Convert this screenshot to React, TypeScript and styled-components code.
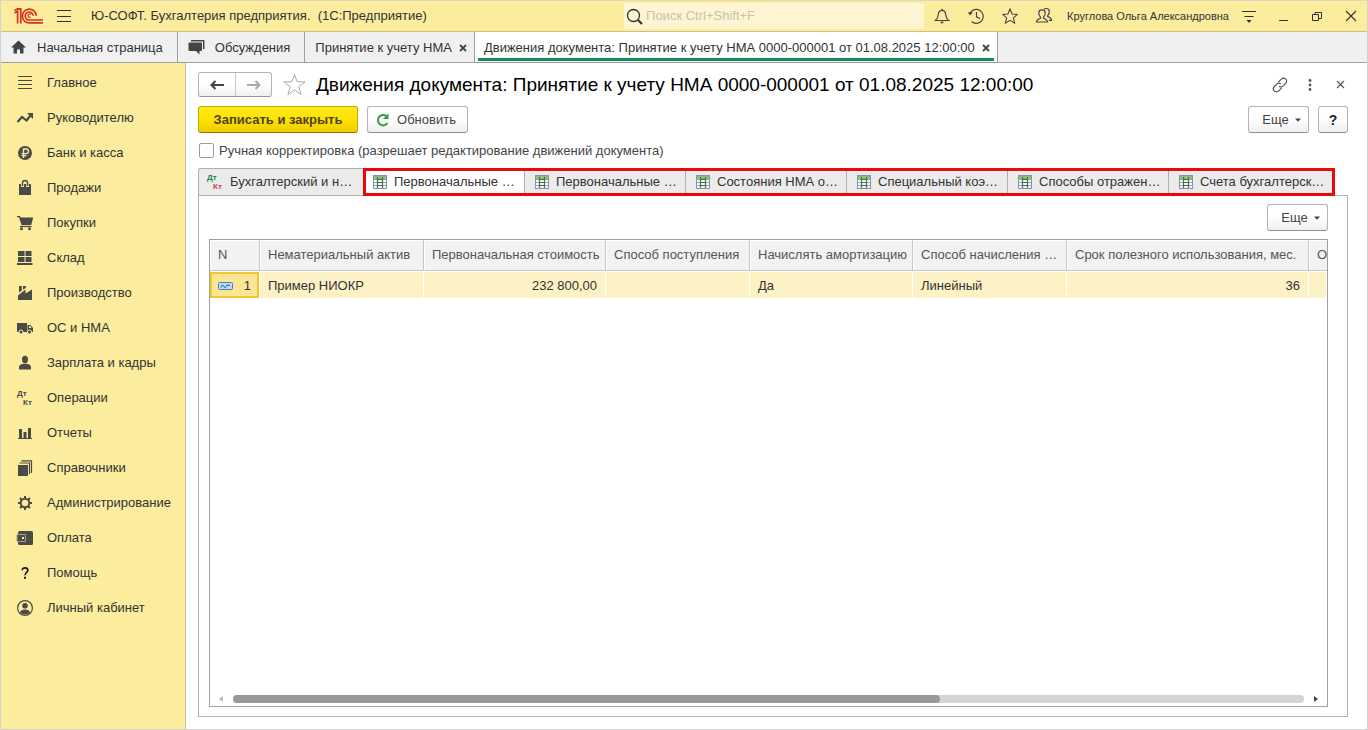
import React from "react";
import styled, { createGlobalStyle, css } from "styled-components";

const GlobalStyle = createGlobalStyle`
  *, *::before, *::after { box-sizing: border-box; }
  body { margin: 0; background: #fff; }
  body, button, input, table { font-family: "Liberation Sans", Arial, sans-serif; font-size: 13px; line-height: 16px; color: #333; }
  button { padding: 0; margin: 0; border: 0; background: none; cursor: pointer; }
  svg { display: block; flex: none; }
`;

/* ---------- frame ---------- */
const Frame = styled.div`
  display: flex;
  flex-direction: column;
  min-height: 100vh;
  border: 1px solid #d2d2d2;
  border-top-color: #dcd8bc;
`;

const TitleBar = styled.header`
  display: flex;
  align-items: center;
  height: 31px;
  background: #fbec9e;
  border-bottom: 1px solid #cdbf7c;
`;

const Logo = styled.a`
  margin-left: 12px;
`;

const MenuButton = styled.button`
  margin-left: 12px;
  color: #333;
`;

const AppTitle = styled.span`
  margin-left: 19px;
  white-space: pre;
`;

const SearchBox = styled.label`
  display: flex;
  align-items: center;
  gap: 3px;
  flex: 0 1 300px;
  height: 26px;
  margin-left: auto;
  padding-left: 2px;
  background: #fef5d2;
  border-radius: 2px;
`;

const SearchInput = styled.input`
  flex: 1;
  min-width: 0;
  padding: 0;
  border: 0;
  outline: 0;
  background: transparent;
  &::placeholder { color: #c9c3ab; opacity: 1; }
`;

const TitleTools = styled.div`
  display: flex;
  align-items: center;
  gap: 2px;
  margin-left: 2px;
`;

const ToolButton = styled.button`
  display: flex;
  align-items: center;
  justify-content: center;
  width: 32px;
  height: 28px;
`;

const UserName = styled.button`
  padding: 0 2px 0 5px;
  font-size: 11px;
  white-space: nowrap;
`;

/* ---------- window tabs ---------- */
const WindowTabs = styled.nav`
  display: flex;
  height: 31px;
  background: #f0f0f0;
  border-bottom: 1px solid #a0a0a0;
`;

const WindowTab = styled.div<{ $active?: boolean; $pinned?: boolean }>`
  display: flex;
  align-items: center;
  padding: 2px ${p => (p.$pinned ? 14 : 7)}px 0 10px;
  border-right: 1px solid #a0a0a0;
  white-space: nowrap;
  ${p => p.$active && css`
    padding-left: 9px;
    background: #fff;
    box-shadow: inset 3px 0 #fff, inset -3px 0 #fff, inset 0 -1px #fff, inset 0 -4px #1a8a58;
  `}
`;

const WindowTabLabel = styled.button`
  display: flex;
  align-items: center;
  gap: 10px;
`;

const CloseTab = styled.button`
  margin-left: 7px;
`;

/* ---------- sections ---------- */
const Body = styled.div`
  display: flex;
  flex: 1;
`;

const Sidebar = styled.nav`
  flex: none;
  width: 185px;
  padding-top: 2px;
  background: #fbec9e;
  border-right: 1px solid #cfc58d;
`;

const Section = styled.a`
  display: flex;
  align-items: center;
  gap: 13px;
  height: 35px;
  padding-left: 15px;
  color: #333;
  text-decoration: none;
  white-space: nowrap;
`;

/* ---------- form ---------- */
const Form = styled.main`
  display: flex;
  flex-direction: column;
  flex: 1;
  min-width: 0;
  padding: 9px 19px 12px 12px;
`;

const FormHead = styled.div`
  display: flex;
  align-items: center;
  height: 25px;
`;

const NavButtons = styled.div`
  display: flex;
  height: 25px;
  border: 1px solid #b4b4b4;
  border-bottom-color: #939393;
  border-radius: 3px;
  background: linear-gradient(#fff 50%, #f0f0f0);
`;

const NavButton = styled.button`
  display: flex;
  align-items: center;
  justify-content: center;
  width: 36px;
  & + & { border-left: 1px solid #c8c8c8; }
`;

const StarButton = styled.button`
  margin: 0 10px 0 11px;
`;

const FormTitle = styled.h1`
  flex: 1;
  margin: 0;
  font-size: 19px;
  line-height: 24px;
  font-weight: 400;
  color: #000;
  white-space: nowrap;
`;

const FormTools = styled.div`
  display: flex;
  margin-right: -7px;
`;

const FormTool = styled.button`
  display: flex;
  align-items: center;
  justify-content: center;
  width: 30px;
  height: 24px;
`;

const Commands = styled.div`
  display: flex;
  align-items: center;
  gap: 9px;
  margin-top: 9px;
`;

const Spacer = styled.span`
  flex: 1;
`;

const Button = styled.button<{ $primary?: boolean; $width?: number }>`
  display: flex;
  align-items: center;
  justify-content: center;
  gap: 6px;
  height: 27px;
  width: ${p => p.$width}px;
  border: 1px solid #b4b4b4;
  border-bottom-color: #8f8f8f;
  border-radius: 3px;
  background: linear-gradient(#fff 45%, #f0f0f0);
  color: #444;
  white-space: nowrap;
  ${p => p.$primary && css`
    border-color: #c3a900;
    border-bottom-color: #8f7d00;
    background: linear-gradient(#ffea1a, #ffe200 50%, #efcb00);
    color: #4c4423;
    font-weight: 700;
  `}
`;

const MoreText = styled.span`
  padding-left: 6px;
`;

const RefreshText = styled.span`
  padding-right: 4px;
`;

const HelpText = styled.b`
  font-size: 14px;
  color: #222;
`;

const CheckLine = styled.label`
  display: flex;
  align-items: center;
  gap: 5px;
  align-self: flex-start;
  height: 17px;
  margin: 9px 0 9px 1px;
  color: #444;
`;

const CheckBox = styled.input`
  appearance: none;
  width: 15px;
  height: 15px;
  margin: 0;
  border: 1px solid #9a9a9a;
  border-radius: 2px;
  background: #fff;
`;

const RegisterTabs = styled.div`
  display: grid;
  grid-template-columns: minmax(0, 165fr) minmax(0, 972fr);
  margin-right: 13px;
  height: 28px;
  margin-bottom: -1px;
`;

const MarkedTabs = styled.div`
  position: relative;
  display: grid;
  grid-template-columns: minmax(0, 162fr) repeat(4, minmax(0, 161fr)) minmax(0, 166fr);
  &::after {
    content: "";
    position: absolute;
    inset: 0;
    border: 3px solid #e90909;
    pointer-events: none;
  }
`;

const RegisterTab = styled.button<{ $active?: boolean; $first?: boolean }>`
  display: flex;
  align-items: center;
  gap: 7px;
  padding: 0 4px 0 10px;
  border: 1px solid #b0b0b0;
  border-left: 0;
  background: ${p => (p.$active ? "#fff" : "#ebebeb")};
  white-space: nowrap;
  ${p => p.$first && css`
    gap: 6px;
    padding-left: 7px;
    border-left: 1px solid #b0b0b0;
    border-right: 0;
    border-radius: 3px 0 0 0;
  `}
`;

const Panel = styled.section`
  display: flex;
  flex-direction: column;
  flex: 1;
  padding: 8px 19px 9px 10px;
  border: 1px solid #b0b0b0;
`;

const PanelCommands = styled.div`
  display: flex;
  justify-content: flex-end;
  margin-bottom: 8px;
`;

const Grid = styled.div`
  display: flex;
  flex-direction: column;
  flex: 1;
  overflow: hidden;
  border: 1px solid #a0a0a0;
`;

const Table = styled.table`
  width: 100%;
  table-layout: fixed;
  border-collapse: separate;
  border-spacing: 0;
`;

const HeadCell = styled.th`
  height: 31px;
  padding: 0 4px 0 8px;
  overflow: hidden;
  white-space: nowrap;
  text-align: left;
  font-weight: 400;
  color: #555;
  background: #f2f2f2;
  border-right: 1px solid #c6c6c6;
  border-bottom: 1px solid #c6c6c6;
  box-shadow: inset 1px 1px #fff;
  &:last-child { padding-right: 0; border-right: 0; }
`;

const Cell = styled.td<{ $right?: boolean; $current?: boolean }>`
  height: 28px;
  padding: 2px 8px 0 8px;
  background: #fdf1c6;
  border: solid #fff;
  border-width: 1px 1px 1px 0;
  text-align: ${p => (p.$right ? "right" : "left")};
  ${p => p.$current && css`
    background: #fce594;
    box-shadow: inset 0 0 0 2px #f0c530;
  `}
`;

const RowNumber = styled.div`
  display: flex;
  align-items: center;
  justify-content: space-between;
`;

const ScrollBar = styled.div`
  display: flex;
  align-items: center;
  gap: 10px;
  margin-top: auto;
  padding: 0 9px 3px;
`;

const Track = styled.div`
  flex: 1;
  height: 8px;
  border-radius: 4px;
  background: #d5d5d5;
`;

const Thumb = styled.div`
  width: 66%;
  height: 8px;
  border-radius: 4px;
  background: #999;
`;

/* ---------- icons ---------- */
type IconProps = { size?: number; children: React.ReactNode; stroke?: string; fill?: string; width?: number };

const Icon = ({ size = 18, children, stroke = "none", fill = "none", width = 1 }: IconProps) => (
  <svg width={size} height={size} viewBox={`0 0 ${size} ${size}`} fill={fill} stroke={stroke} strokeWidth={width} aria-hidden="true">
    {children}
  </svg>
);

const DARK = "#4a4a46";

const LogoMark = () => (
  <svg width="31" height="18" viewBox="0 0 31 18" fill="none" stroke="#d8321f" strokeWidth="1.7" aria-hidden="true">
    <path d="M1.500 6 4.600 4.300V16.500M1.500 3.500 4.600 1.900H7.800V16.500" />
    <path d="M23.200 8.800A6.900 6.900 0 1 0 16.500 15.900H30" />
    <path d="M20.200 8.800A4 4 0 1 0 16.500 13H30" />
    <path d="M17.800 7.600A1.600 1.600 0 1 0 17.500 10" strokeWidth="1.200" />
  </svg>
);

const Cross = ({ size = 8, width = 1.8, color = "#444" }: { size?: number; width?: number; color?: string }) => (
  <Icon size={size} stroke={color} width={width}>
    <path d={`M1 1 ${size - 1} ${size - 1}M${size - 1} 1 1 ${size - 1}`} />
  </Icon>
);

const Caret = () => (
  <svg width="6" height="4" viewBox="0 0 6 4" fill="#444" aria-hidden="true">
    <path d="M0 .5h6L3 3.8z" />
  </svg>
);

const RegisterIcon = () => (
  <Icon size={14}>
    <rect x=".5" y=".5" width="13" height="13" fill="#f2f7f8" stroke="#8197a3" />
    <rect x="1" y="1" width="12" height="3" fill="#93bd77" />
    <path d="M1 4.500h12M1 7.500h12M1 10.500h12" stroke="#8fabb5" />
    <path d="M4.500 2v11M9.500 2v11" stroke="#51705f" strokeWidth="1.200" />
    <path d="M4 4.500h6M4 7.500h6M4 10.500h6" stroke="#4b6b45" strokeWidth="1.200" />
  </Icon>
);

const DtKt = ({ top, bottom }: { top: string; bottom: string }) => (
  <svg width="18" height="18" viewBox="0 0 18 18" fontFamily="Liberation Sans, sans-serif" fontSize="8" fontWeight="700" aria-hidden="true">
    <text x="1" y="7" fill={top}>Дт</text>
    <text x="7" y="16" fill={bottom}>Кт</text>
  </svg>
);

const sections: { title: string; icon: React.ReactNode }[] = [
  { title: "Главное", icon: <Icon stroke={DARK}><path d="M2 2.500h14M2 6.500h14M2 10.500h14M2 14.500h14" /></Icon> },
  { title: "Руководителю", icon: <Icon><path d="M1.500 13 6 8l4.500 3.500L15 6" stroke={DARK} strokeWidth="2.200" fill="none" /><path d="M11 4h6v6z" fill={DARK} /></Icon> },
  {
    title: "Банк и касса",
    icon: <Icon><circle cx="9" cy="9" r="7" fill={DARK} /><path d="M7.500 14V5h2.700a2.300 2.300 0 0 1 0 4.600H5.500M5.500 11.700h5" stroke="#fbec9e" strokeWidth="1.300" /></Icon>,
  },
  { title: "Продажи", icon: <Icon><path d="M3 5h12v11H3z" fill={DARK} /><path d="M6.500 8V4a2.500 2.500 0 0 1 5 0V8" stroke="#fbec9e" strokeWidth="2.800" /><path d="M6.500 7V4a2.500 2.500 0 0 1 5 0v3" stroke={DARK} strokeWidth="1.400" /></Icon> },
  { title: "Покупки", icon: <Icon><path d="M1 2h3l.6 1.500H17.200l-2 7.500H5.500L3 3.200H1z" fill={DARK} /><path d="M4 12.500h11.500" stroke={DARK} strokeWidth="1.300" /><circle cx="5.500" cy="14.700" r="1.500" fill={DARK} /><circle cx="13.500" cy="14.700" r="1.500" fill={DARK} /></Icon> },
  { title: "Склад", icon: <Icon fill={DARK}><path d="M2 2h6.500v5H2zM9.500 2H15.500v5H9.500zM2 8h6.500v5H2zM9.500 8H15.500v5H9.500zM1 14h15.500v2H1z" /></Icon> },
  { title: "Производство", icon: <Icon fill={DARK}><path d="M2 16V11.500l7.500-6V9.500L16 5.500V16zM3 2h2.800v4.500L3 8.500zM7 2h2.800v2L7 5.800z" /></Icon> },
  { title: "ОС и НМА", icon: <Icon><path d="M1 4h10v9H1zM11.500 6h3l2.500 3v4h-5.500z" fill={DARK} /><path d="M13 7h1.200l1.500 2H13z" fill="#fbec9e" /><circle cx="5" cy="13" r="2" fill={DARK} stroke="#fbec9e" /><circle cx="13.500" cy="13" r="2" fill={DARK} stroke="#fbec9e" /></Icon> },
  { title: "Зарплата и кадры", icon: <Icon fill={DARK}><ellipse cx="9" cy="5.500" rx="3" ry="3.700" /><path d="M3 15.500v-2.500c0-1.500 1.500-2.700 4-3.200h4c2.500.5 4 1.700 4 3.200v2.500z" /></Icon> },
  { title: "Операции", icon: <DtKt top={DARK} bottom={DARK} /> },
  { title: "Отчеты", icon: <Icon fill={DARK}><path d="M2 14h14v1H2zM3 5h3v9H3zM7.500 8h3v6h-3zM12 4h3v10h-3z" /></Icon> },
  { title: "Справочники", icon: <Icon><path d="M2 6h10v11H2z" fill={DARK} /><path d="M3.500 4h10V15M5.500 1.800h10V14" stroke={DARK} strokeWidth="1.200" /></Icon> },
  {
    title: "Администрирование",
    icon: (
      <Icon stroke={DARK} width={2}>
        <circle cx="9" cy="9" r="4.300" />
        <path d="M9 2v2.500M9 13.500V16M2 9h2.500M13.500 9H16M4 4l1.800 1.800M12.200 12.200 14 14M4 14l1.800-1.800M12.200 5.800 14 4" />
      </Icon>
    ),
  },
  { title: "Оплата", icon: <Icon><rect x="2" y="2" width="15" height="14" rx="1.500" fill={DARK} /><path d="M1 5.500h8.500v7H1z" fill={DARK} stroke="#a9a27c" /><path d="M6 8h2v2H6z" fill="#fbec9e" /></Icon> },
  { title: "Помощь", icon: <Icon><path d="M6.300 6.300C6.300 4.500 7.500 3.800 9 3.800s2.800.8 2.800 2.400c0 2.200-2.700 2.200-2.700 5" stroke="#1a1a1a" strokeWidth="1.700" /><path d="M8 12.700h2v2H8z" fill="#1a1a1a" /></Icon> },
  { title: "Личный кабинет", icon: <Icon><circle cx="9" cy="9" r="7.400" stroke={DARK} strokeWidth="1.200" /><circle cx="9" cy="6.800" r="2.800" fill={DARK} /><path d="M4 13.500c.5-2.200 2.500-3 5-3s4.500.8 5 3c-2.500 2.500-7.500 2.500-10 0z" fill={DARK} /></Icon> },
];

const registers = [
  { id: "initial-accounting", title: "Первоначальные …" },
  { id: "initial-tax", title: "Первоначальные …" },
  { id: "states", title: "Состояния НМА о…" },
  { id: "coefficient", title: "Специальный коэ…" },
  { id: "expenses", title: "Способы отражен…" },
  { id: "accounts", title: "Счета бухгалтерск…" },
];

const columns: { title: string; width?: number; value?: string; right?: boolean }[] = [
  { title: "Нематериальный актив", width: 164, value: "Пример НИОКР" },
  { title: "Первоначальная стоимость", width: 182, value: "232 800,00", right: true },
  { title: "Способ поступления", width: 144 },
  { title: "Начислять амортизацию", width: 163, value: "Да" },
  { title: "Способ начисления …", width: 154, value: "Линейный" },
  { title: "Срок полезного использования, мес.", width: 242, value: "36", right: true },
  { title: "О" },
];

const documentTitle = "Движения документа: Принятие к учету НМА 0000-000001 от 01.08.2025 12:00:00";

export default function App() {
  return (
    <>
      <GlobalStyle />
      <Frame>
        <TitleBar>
          <Logo href="#" aria-label="1С"><LogoMark /></Logo>
          <MenuButton aria-label="Меню">
            <Icon size={16} stroke="#333"><path d="M1 2.500h14M1 8.500h14M1 13.500h14" /></Icon>
          </MenuButton>
          <AppTitle>{"Ю-СОФТ. Бухгалтерия предприятия.  (1С:Предприятие)"}</AppTitle>
          <SearchBox>
            <Icon size={17} stroke="#333" width={1.3}><circle cx="7.500" cy="7.500" r="6" /><path d="m12 12 4 4" strokeWidth="2.200" /></Icon>
            <SearchInput aria-label="Поиск" placeholder="Поиск Ctrl+Shift+F" />
          </SearchBox>
          <TitleTools>
            <ToolButton aria-label="Уведомления">
              <Icon size={16} stroke="#444" width={1.2}><path d="M1.500 12.500c2-1.500 2.500-3 2.800-6C4.500 3.800 6 2.300 8 2.300s3.500 1.500 3.700 4.200c.3 3 .8 4.500 2.800 6z" /><path d="M8 .8v1.500" /><path d="M5.800 13.800h4.400L8 15.800z" fill="#444" stroke="none" /></Icon>
            </ToolButton>
            <ToolButton aria-label="История">
              <Icon size={18} stroke="#444" width={1.2}><path d="M3 6.200A7 7 0 1 1 4.500 14.500" /><path d="M9.500 5v4.800l3.500 2" /><path d="M.8 5.200h5L3 8.500z" fill="#444" stroke="none" /></Icon>
            </ToolButton>
            <ToolButton aria-label="Избранное">
              <Icon size={16} stroke="#444" width={1.1}><path d="m8 1 2.100 5 5.300.4-4 3.500 1.200 5.200L8 12.300l-4.600 2.800 1.200-5.200-4-3.500L5.900 6z" /></Icon>
            </ToolButton>
            <ToolButton aria-label="Пользователи">
              <Icon size={18} stroke="#444" width={1.2}>
                <path d="M1.500 15c0-2.500 1.500-3 4-3.800v-1C4 8.800 3.600 7.300 3.800 5.600 4 3.800 5.200 2.900 7 2.900s3 .9 3.200 2.700c.2 1.700-.2 3.200-1.700 4.600v1c2.500.8 4 1.300 4 3.800z" />
                <path d="M9 2.200c.7-.5 1.500-.7 2.300-.7 1.700 0 2.800.9 3 2.600.2 1.700-.2 3.100-1.600 4.500v1c2.500.8 3.800 1.400 3.800 3.700h-2.700" />
              </Icon>
            </ToolButton>
            <UserName>Круглова Ольга Александровна</UserName>
            <ToolButton aria-label="Настройки">
              <Icon size={16} stroke="#333"><path d="M1 3.500h14M3.500 8.500h9" /><path d="M5.500 12h5L8 15z" fill="#333" stroke="none" /></Icon>
            </ToolButton>
            <ToolButton aria-label="Свернуть">
              <Icon size={12} stroke="#333"><path d="M2 10.500h9" /></Icon>
            </ToolButton>
            <ToolButton aria-label="Развернуть">
              <Icon size={12} stroke="#333"><path d="M1.500 4.500h6v6h-6zM4 4V2.500h6.500v6H8" /></Icon>
            </ToolButton>
            <ToolButton aria-label="Закрыть"><Cross size={12} width={1.1} color="#333" /></ToolButton>
          </TitleTools>
        </TitleBar>

        <WindowTabs>
          <WindowTab $pinned>
            <WindowTabLabel>
              <Icon size={16} fill="#444"><path d="M7.500 .5 15 7.500H12.500V13.500H9v-4H6v4H2.500V7.500H0z" /></Icon>
              Начальная страница
            </WindowTabLabel>
          </WindowTab>
          <WindowTab $pinned>
            <WindowTabLabel>
              <Icon size={17}><path d="M3 0h12.500c.6 0 1 .4 1 1v8H15V1.500H3z" fill="#444" /><path d="M1.500 2.500h11.500c.6 0 1 .4 1 1V10c0 .6-.4 1-1 1h-1.500v3.500L8 11H1.500c-.6 0-1-.4-1-1V3.500c0-.6.4-1 1-1z" fill="#444" /></Icon>
              Обсуждения
            </WindowTabLabel>
          </WindowTab>
          <WindowTab>
            <WindowTabLabel>Принятие к учету НМА</WindowTabLabel>
            <CloseTab aria-label="Закрыть вкладку"><Cross /></CloseTab>
          </WindowTab>
          <WindowTab $active>
            <WindowTabLabel>{documentTitle}</WindowTabLabel>
            <CloseTab aria-label="Закрыть вкладку"><Cross /></CloseTab>
          </WindowTab>
        </WindowTabs>

        <Body>
          <Sidebar>
            {sections.map(s => (
              <Section key={s.title} href="#">{s.icon}{s.title}</Section>
            ))}
          </Sidebar>

          <Form>
            <FormHead>
              <NavButtons>
                <NavButton aria-label="Назад">
                  <Icon size={14}><path d="M2 7h12" stroke="#444" strokeWidth="2" /><path d="M5.500 3 1.500 7l4 4" stroke="#444" strokeWidth="2" /></Icon>
                </NavButton>
                <NavButton aria-label="Вперед">
                  <Icon size={14}><path d="M0 7h12" stroke="#aaa" strokeWidth="2" /><path d="m8.500 3 4 4-4 4" stroke="#aaa" strokeWidth="2" /></Icon>
                </NavButton>
              </NavButtons>
              <StarButton aria-label="В избранное">
                <Icon size={23} stroke="#aaa"><path d="m11.500 1.500 2.600 7.200 8 .2-6.300 4.800 2.300 7.800-6.600-4.600-6.600 4.600 2.300-7.800L.9 8.900l8-.2z" /></Icon>
              </StarButton>
              <FormTitle>{documentTitle}</FormTitle>
              <FormTools>
                <FormTool aria-label="Ссылка">
                  <Icon size={16} stroke="#555" width={1.2}><path d="m6.300 5.200 3-3c1.300-1.300 3.200-1.300 4.400-.1s1.200 3.100-.1 4.400l-2.400 2.400c-1.300 1.300-3 1.200-4.200.3" /><path d="m9.700 10.800-3 3c-1.300 1.300-3.200 1.300-4.400.1s-1.200-3.100.1-4.400l2.400-2.400c1.300-1.300 3-1.200 4.200-.3" /></Icon>
                </FormTool>
                <FormTool aria-label="Действия">
                  <Icon size={14} fill="#555"><circle cx="7" cy="2.500" r="1.400" /><circle cx="7" cy="7" r="1.400" /><circle cx="7" cy="11.500" r="1.400" /></Icon>
                </FormTool>
                <FormTool aria-label="Закрыть"><Cross size={9} width={1.1} color="#555" /></FormTool>
              </FormTools>
            </FormHead>

            <Commands>
              <Button $primary $width={160}>Записать и закрыть</Button>
              <Button $width={101}>
                <Icon size={16}><path d="M12.500 11A5.200 5.200 0 1 1 11.500 4.200" stroke="#2f9e44" strokeWidth="2" /><path d="M13.500 1.500v5.500H8z" fill="#2f9e44" /></Icon>
                <RefreshText>Обновить</RefreshText>
              </Button>
              <Spacer />
              <Button $width={61}><MoreText>Еще</MoreText><Caret /></Button>
              <Button $width={30} aria-label="Справка"><HelpText>?</HelpText></Button>
            </Commands>

            <CheckLine>
              <CheckBox type="checkbox" />
              Ручная корректировка (разрешает редактирование движений документа)
            </CheckLine>

            <RegisterTabs>
              <RegisterTab $first>
                <DtKt top="#1a8a4a" bottom="#d04545" />
                Бухгалтерский и н…
              </RegisterTab>
              <MarkedTabs>
                {registers.map((r, i) => (
                  <RegisterTab key={r.id} $active={i === 0}>
                    <RegisterIcon />
                    {r.title}
                  </RegisterTab>
                ))}
              </MarkedTabs>
            </RegisterTabs>

            <Panel>
              <PanelCommands>
                <Button $width={61}><MoreText>Еще</MoreText><Caret /></Button>
              </PanelCommands>
              <Grid>
                <Table>
                  <colgroup>
                    <col style={{ width: 50 }} />
                    {columns.map(c => <col key={c.title} style={{ width: c.width }} />)}
                  </colgroup>
                  <thead>
                    <tr>
                      <HeadCell>N</HeadCell>
                      {columns.map(c => <HeadCell key={c.title}>{c.title}</HeadCell>)}
                    </tr>
                  </thead>
                  <tbody>
                    <tr>
                      <Cell $current>
                        <RowNumber>
                          <svg width="15" height="8" viewBox="0 0 15 8" fill="none" aria-hidden="true">
                            <rect x=".5" y=".5" width="14" height="7" rx="1" fill="#b9dcf5" stroke="#4f83b5" />
                            <path d="M3 5.500c1-3 2-3 3-1s2 1 2.500-.5 1.500-1 3.500-.5" stroke="#1f4e80" />
                          </svg>
                          1
                        </RowNumber>
                      </Cell>
                      {columns.map(c => <Cell key={c.title} $right={c.right}>{c.value}</Cell>)}
                    </tr>
                  </tbody>
                </Table>
                <ScrollBar>
                  <svg width="4" height="6" viewBox="0 0 4 6" fill="#bbb" aria-hidden="true"><path d="M4 0v6L0 3z" /></svg>
                  <Track><Thumb /></Track>
                  <svg width="4" height="6" viewBox="0 0 4 6" fill="#444" aria-hidden="true"><path d="M0 0v6l4-3z" /></svg>
                </ScrollBar>
              </Grid>
            </Panel>
          </Form>
        </Body>
      </Frame>
    </>
  );
}
